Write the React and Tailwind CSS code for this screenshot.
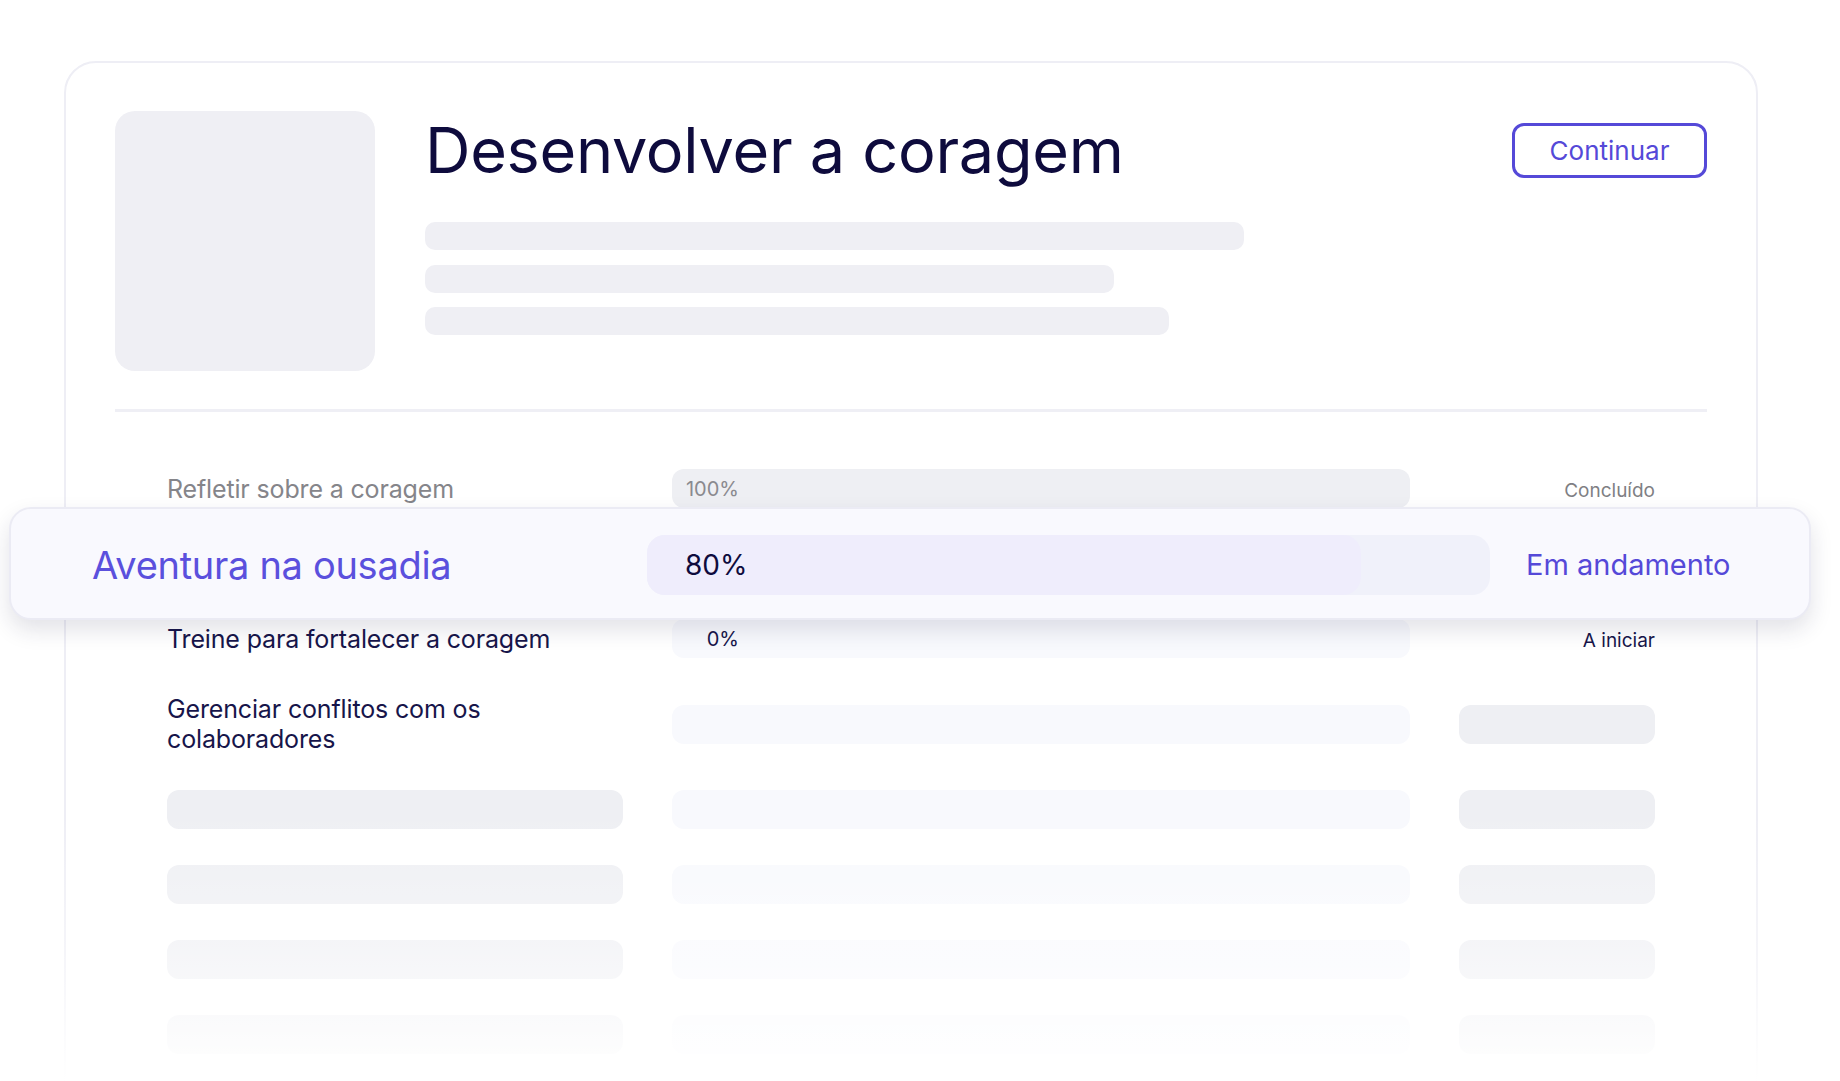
import React from 'react'

const rows = [
  { kind: 'done', title: 'Refletir sobre a coragem', pct: '100%', status: 'Concluído' },
  { kind: 'active', title: 'Aventura na ousadia', pct: '80%', status: 'Em andamento' },
  { kind: 'todo', title: 'Treine para fortalecer a coragem', pct: '0%', status: 'A iniciar' },
  { kind: 'locked', title: 'Gerenciar conflitos com os colaboradores' },
  { kind: 'skeleton' },
  { kind: 'skeleton' },
  { kind: 'skeleton' },
  { kind: 'skeleton' },
]

function Row({ row }) {
  if (row.kind === 'active') {
    return (
      <div className="relative h-[39px]">
        {/* floating highlighted module */}
        <div className="absolute left-[-158px] right-[-156px] top-[-37px] bottom-[-37px] flex items-center rounded-[22px] border-2 border-[#ebebf4] bg-[#f9f9fe] pl-[81px] pt-[2px] shadow-[0_10px_22px_rgba(30,30,70,0.13)]">
          <div className="w-[555px] shrink-0 text-[38px] leading-[44px] tracking-[-0.3px] text-[#5b50dd]">{row.title}</div>
          <div className="flex h-[60px] w-[843px] shrink-0 rounded-[18px] bg-[#f0f1fa]">
            <div className="flex h-full w-[714px] items-center rounded-[18px] bg-[#efedfc] pl-[38px] text-[28px] text-[#0e0b3d]">
              {row.pct}
            </div>
          </div>
          <div className="ml-[36px] text-[29px] text-[#5549d8]">{row.status}</div>
        </div>
      </div>
    )
  }

  if (row.kind === 'skeleton') {
    return (
      <div className="flex items-center">
        <div className="h-[39px] w-[456px] shrink-0 rounded-[12px] bg-[#eeeff3]" />
        <div className="ml-[49px] h-[39px] flex-1 rounded-[12px] bg-[#f8f9fd]" />
        <div className="ml-[49px] h-[39px] w-[196px] shrink-0 rounded-[12px] bg-[#eeeff3]" />
      </div>
    )
  }

  const done = row.kind === 'done'
  return (
    <div className="flex items-center">
      <div className={`w-[456px] shrink-0 text-[25px] leading-[30px] tracking-[-0.15px] ${done ? 'text-[#85858a]' : 'text-[#17154a]'}`}>
        {row.title}
      </div>
      <div className={`ml-[49px] flex h-[39px] flex-1 items-center rounded-[12px] ${done ? 'bg-[#eeeff3]' : 'bg-[#f8f9fd]'}`}>
        {row.pct && (
          <span className={`w-[67px] text-right text-[20px] ${done ? 'text-[#8a8a8f]' : 'text-[#17154a]'}`}>{row.pct}</span>
        )}
      </div>
      {row.status ? (
        <div className={`ml-[49px] w-[196px] shrink-0 pt-[6px] text-right text-[19px] ${done ? 'text-[#7f7f84]' : 'text-[#17154a]'}`}>
          {row.status}
        </div>
      ) : (
        <div className="ml-[49px] h-[39px] w-[196px] shrink-0 rounded-[12px] bg-[#eeeff3]" />
      )}
    </div>
  )
}

export default function App() {
  return (
    <div className="relative h-[1081px] w-[1840px] overflow-hidden bg-white font-[Inter,sans-serif]">
      <div className="ml-[64px] mt-[61px] w-[1694px] rounded-[32px] border-2 border-[#eeeef5] bg-white px-[49px] pt-[48px] pb-[120px]">
        {/* header */}
        <div className="flex items-start">
          <div className="h-[260px] w-[260px] shrink-0 rounded-[20px] bg-[#efeff4]" />
          <div className="ml-[50px] flex-1 pt-[8px]">
            <h1 className="text-[63px] leading-[63px] tracking-[-0.3px] text-[#0e0b3d]">Desenvolver a coragem</h1>
            <div className="mt-[40px] h-[28px] w-[819px] rounded-[10px] bg-[#efeff4]" />
            <div className="mt-[15px] h-[28px] w-[689px] rounded-[10px] bg-[#efeff4]" />
            <div className="mt-[14px] h-[28px] w-[744px] rounded-[10px] bg-[#efeff4]" />
          </div>
          <button className="mt-[12px] flex h-[55px] w-[195px] shrink-0 items-center justify-center rounded-[12px] border-[3px] border-[#5549d8] text-[26px] text-[#5549d8]">
            Continuar
          </button>
        </div>

        <div className="mt-[38px] h-[3px] bg-[#efeff5]" />

        {/* modules */}
        <div className="mt-[57px] flex flex-col gap-[36px] px-[52px]">
          {rows.map((r, i) => (
            <Row key={i} row={r} />
          ))}
        </div>
      </div>

      {/* fade out at the bottom */}
      <div className="pointer-events-none absolute inset-x-0 bottom-0 h-[270px] bg-linear-to-b from-white/0 via-white/40 to-white" />
    </div>
  )
}
